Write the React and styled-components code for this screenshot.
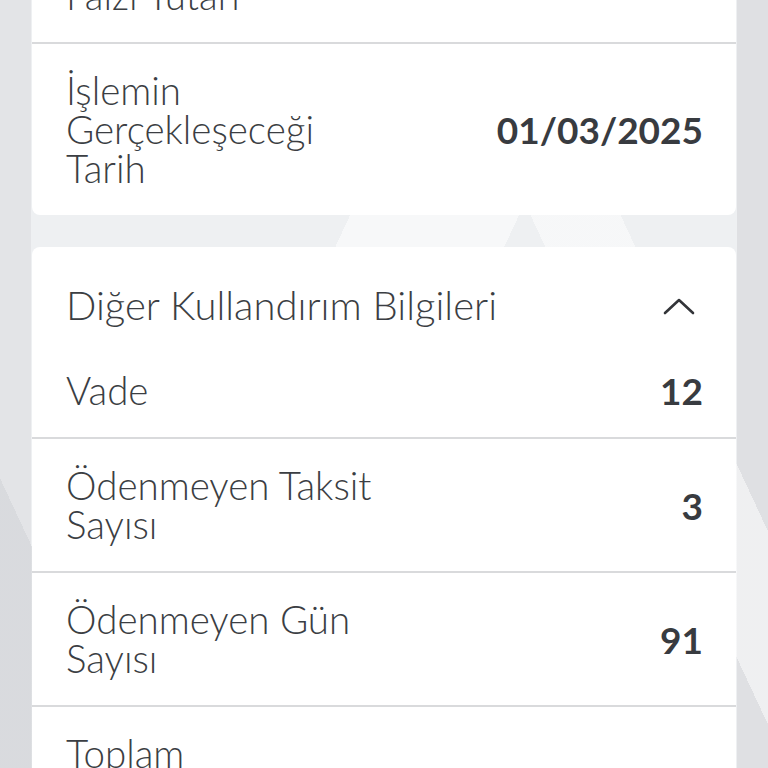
import React from 'react';
import styled, { createGlobalStyle } from 'styled-components';

const Global = createGlobalStyle`
  html, body {
    margin: 0;
    padding: 0;
    height: 100%;
    overflow: hidden;
  }
  body {
    font-family: Lato, "Noto Sans", sans-serif;
    color: #3b3e43;
    background-color: #e6e7e9;
    background-image:
      linear-gradient(115deg, transparent 0 40%, rgba(255,255,255,0.55) 40% 55%, transparent 55%),
      linear-gradient(65deg, rgba(210,212,216,0.6) 0 12%, transparent 12% 70%, rgba(255,255,255,0.5) 70% 78%, transparent 78%),
      linear-gradient(90deg, #e3e4e7 0 4%, #eef0f2 4% 96%, #dfe0e3 96%);
  }
`;

const Page = styled.div`
  display: flex;
  flex-direction: column;
  gap: 32px;
  padding: 0 32px;
  margin-top: -51px;
`;

const Card = styled.section`
  background: #fff;
  border-radius: 8px;
  overflow: hidden;
`;

const Row = styled.div`
  display: flex;
  align-items: center;
  justify-content: space-between;
  gap: 24px;
  padding: 27px 33px 27px 34px;
  border-top: ${({ $first }) => ($first ? 'none' : '2px solid #d9dadc')};
  font-size: 38.5px;
  line-height: 39px;
`;

const Label = styled.div`
  max-width: 312px;
  font-weight: 300;
`;

const Value = styled.div`
  font-size: 37px;
  font-weight: 700;
  color: #383b40;
  white-space: nowrap;
`;

const Header = styled.div`
  display: flex;
  align-items: center;
  justify-content: space-between;
  padding: 39px 40px 19px 34px;
  font-size: 40px;
  line-height: 39px;
  font-weight: 300;
`;

const Chevron = () => (
  <svg width="34" height="20" viewBox="0 0 34 20" fill="none">
    <path d="M3 17 L17 4 L31 17" stroke="#333539" strokeWidth="2.6" strokeLinecap="round" strokeLinejoin="round" />
  </svg>
);

const other = [
  { label: 'Vade', value: '12', first: true },
  { label: 'Ödenmeyen Taksit Sayısı', value: '3' },
  { label: 'Ödenmeyen Gün Sayısı', value: '91' },
  { label: 'Toplam', value: '' },
];

export default function App() {
  return (
    <>
      <Global />
      <Page>
        <Card>
          <Row $first>
            <Label>Faizi Tutarı</Label>
            <Value></Value>
          </Row>
          <Row>
            <Label>İşlemin Gerçekleşeceği Tarih</Label>
            <Value>01/03/2025</Value>
          </Row>
        </Card>
        <Card>
          <Header>
            <span>Diğer Kullandırım Bilgileri</span>
            <Chevron />
          </Header>
          {other.map((r) => (
            <Row key={r.label} $first={r.first}>
              <Label>{r.label}</Label>
              <Value>{r.value}</Value>
            </Row>
          ))}
        </Card>
      </Page>
    </>
  );
}
